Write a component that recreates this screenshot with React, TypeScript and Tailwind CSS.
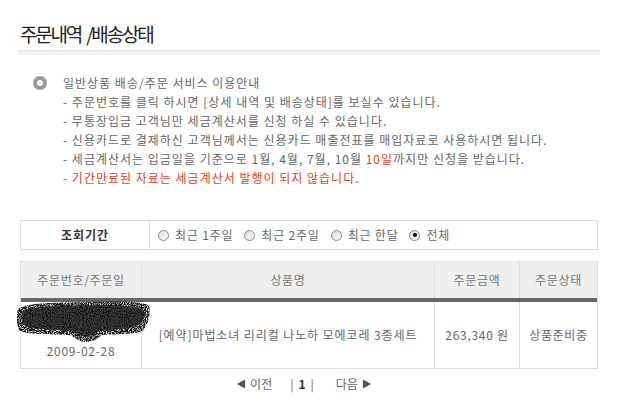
import React from "react";

const infoLines: { text: React.ReactNode; red?: boolean }[] = [
    { text: "- 주문번호를 클릭 하시면 [상세 내역 및 배송상태]를 보실수 있습니다." },
    { text: "- 무통장입금 고객님만 세금계산서를 신청 하실 수 있습니다." },
    { text: "- 신용카드로 결제하신 고객님께서는 신용카드 매출전표를 매입자료로 사용하시면 됩니다." },
    {
        text: (
            <>
                - 세금계산서는 입금일을 기준으로 1월, 4월, 7월, 10월 <span className="text-[#e2401b]">10일</span>까지만 신청을 받습니다.
            </>
        ),
    },
    { text: "- 기간만료된 자료는 세금계산서 발행이 되지 않습니다.", red: true },
];

const periods = ["최근 1주일", "최근 2주일", "최근 한달", "전체"];

const Radio = ({ checked }: { checked: boolean }) => (
    <span className="w-[11px] h-[11px] rounded-full border border-[#8a8a8a] bg-gradient-to-br from-[#d8d8d8] to-white flex items-center justify-center">
        {checked && <span className="w-[4px] h-[4px] rounded-full bg-black" />}
    </span>
);

// blacked-out order number
const Scribble = () => (
    <svg width="134" height="42" viewBox="0 0 134 42" className="absolute left-[-4px] top-[-1px]">
        <defs>
            <filter id="speckle" x="0" y="0" width="100%" height="100%">
                <feTurbulence type="fractalNoise" baseFrequency="0.95" numOctaves="1" seed="4" result="n" />
                <feColorMatrix in="n" type="matrix" values="0 0 0 0 0  0 0 0 0 0  0 0 0 0 0  3.4 0 0 0 -1.0" result="m" />
                <feComposite in="SourceGraphic" in2="m" operator="in" />
            </filter>
        </defs>
        <g filter="url(#speckle)">
            <path d="M1 8 C10 1 40 2 70 1 C95 0 122 0 132 4 C134 14 131 26 124 31 C110 34 96 33 84 34 C80 39 74 41 67 41 C61 40 58 36 52 34 C35 33 14 34 3 30 C-1 24 -1 14 1 8 Z" fill="#000" />
        </g>
        <path d="M6 9 C25 4 60 5 90 4 C112 4 126 6 128 12 C128 21 121 27 102 28 C88 29 80 30 74 34 C70 37 64 36 61 32 C52 29 30 29 12 27 C4 24 3 15 6 9 Z" fill="#000" />
        <g filter="url(#speckle)">
            <path d="M6 9 C25 4 60 5 90 4 C112 4 126 6 128 12 C128 21 121 27 102 28 C88 29 80 30 74 34 C70 37 64 36 61 32 C52 29 30 29 12 27 C4 24 3 15 6 9 Z" fill="#fff" opacity="0.25" />
        </g>
    </svg>
);

export default function App() {
    return (
        <div className="w-[624px] h-[412px] bg-white font-['Noto_Sans_CJK_KR',sans-serif] text-[#666] overflow-hidden">
            <div className="pl-[18px] pr-[24px] pt-[21px]">
                <h1 className="pl-[2px] text-[19px] leading-[26px] tracking-[-2.2px] text-[#222] font-normal">
                    주문내역<span className="ml-[5px]">/배송상태</span>
                </h1>
                <div className="mt-[3px] h-[5px] border-t border-[#e2e2e2] bg-[#f0f0f0]" />
            </div>

            <div className="flex pl-[33px] mt-[18px]">
                <span className="mt-[3px] w-[14px] h-[14px] rounded-full border-[4px] border-[#9a9a9a] bg-white shrink-0" />
                <div className="ml-[16px] text-[12px] leading-[19px] tracking-[1px]">
                    <p>일반상품 배송/주문 서비스 이용안내</p>
                    {infoLines.map((line, i) => (
                        <p key={i} className={line.red ? "text-[#e2401b]" : ""}>
                            {line.text}
                        </p>
                    ))}
                </div>
            </div>

            <div className="ml-[20px] mr-[26px] mt-[33px] h-[30px] border border-[#dcdcdc] flex text-[12px]">
                <div className="w-[129px] border-r border-[#dcdcdc] flex items-center justify-center font-bold text-[#333] tracking-[1px]">
                    조회기간
                </div>
                <div className="flex items-center pl-[8px] gap-[11px] tracking-[0.8px]">
                    {periods.map((p, i) => (
                        <label key={p} className="flex items-center gap-[6px]">
                            <Radio checked={i === periods.length - 1} />
                            <span>{p}</span>
                        </label>
                    ))}
                </div>
            </div>

            <div className="ml-[20px] mr-[26px] mt-[11px] border-x border-b border-[#dcdcdc] text-[12px] tracking-[0.7px]">
                <div className="flex h-[37px] bg-[#efefef] border-t border-[#e4e4e4] text-[#777]">
                    <div className="w-[121px] flex items-center justify-center border-r border-[#dcdcdc]">주문번호/주문일</div>
                    <div className="w-[293px] flex items-center justify-center border-r border-[#dcdcdc]">상품명</div>
                    <div className="w-[85px] flex items-center justify-center border-r border-[#dcdcdc]">주문금액</div>
                    <div className="flex-1 flex items-center justify-center">주문상태</div>
                </div>
                <div className="h-[4px] bg-[#666]" />
                <div className="flex h-[66px]">
                    <div className="relative w-[121px] border-r border-[#dcdcdc] flex flex-col items-center justify-end pb-[8px]">
                        <Scribble />
                        <span>2009-02-28</span>
                    </div>
                    <div className="w-[293px] flex items-center justify-center border-r border-[#dcdcdc] tracking-[0.9px]">
                        [예약]마법소녀 리리컬 나노하 모에코레 3종세트
                    </div>
                    <div className="w-[85px] flex items-center justify-center border-r border-[#dcdcdc]">263,340 원</div>
                    <div className="flex-1 flex items-center justify-center">상품준비중</div>
                </div>
            </div>

            <div className="flex items-center justify-center mt-[6px] text-[12px] text-[#666] pr-[16px]">
                <svg width="10" height="10" viewBox="0 0 10 10" className="mr-[4px]">
                    <path d="M1 5 L9 0.5 L9 9.5 Z" fill="#555" />
                </svg>
                <span>이전</span>
                <span className="ml-[18px]">|</span>
                <span className="mx-[5px] font-bold text-[#333]">1</span>
                <span>|</span>
                <span className="ml-[22px]">다음</span>
                <svg width="10" height="10" viewBox="0 0 10 10" className="ml-[4px]">
                    <path d="M9 5 L1 0.5 L1 9.5 Z" fill="#555" />
                </svg>
            </div>
        </div>
    );
}
